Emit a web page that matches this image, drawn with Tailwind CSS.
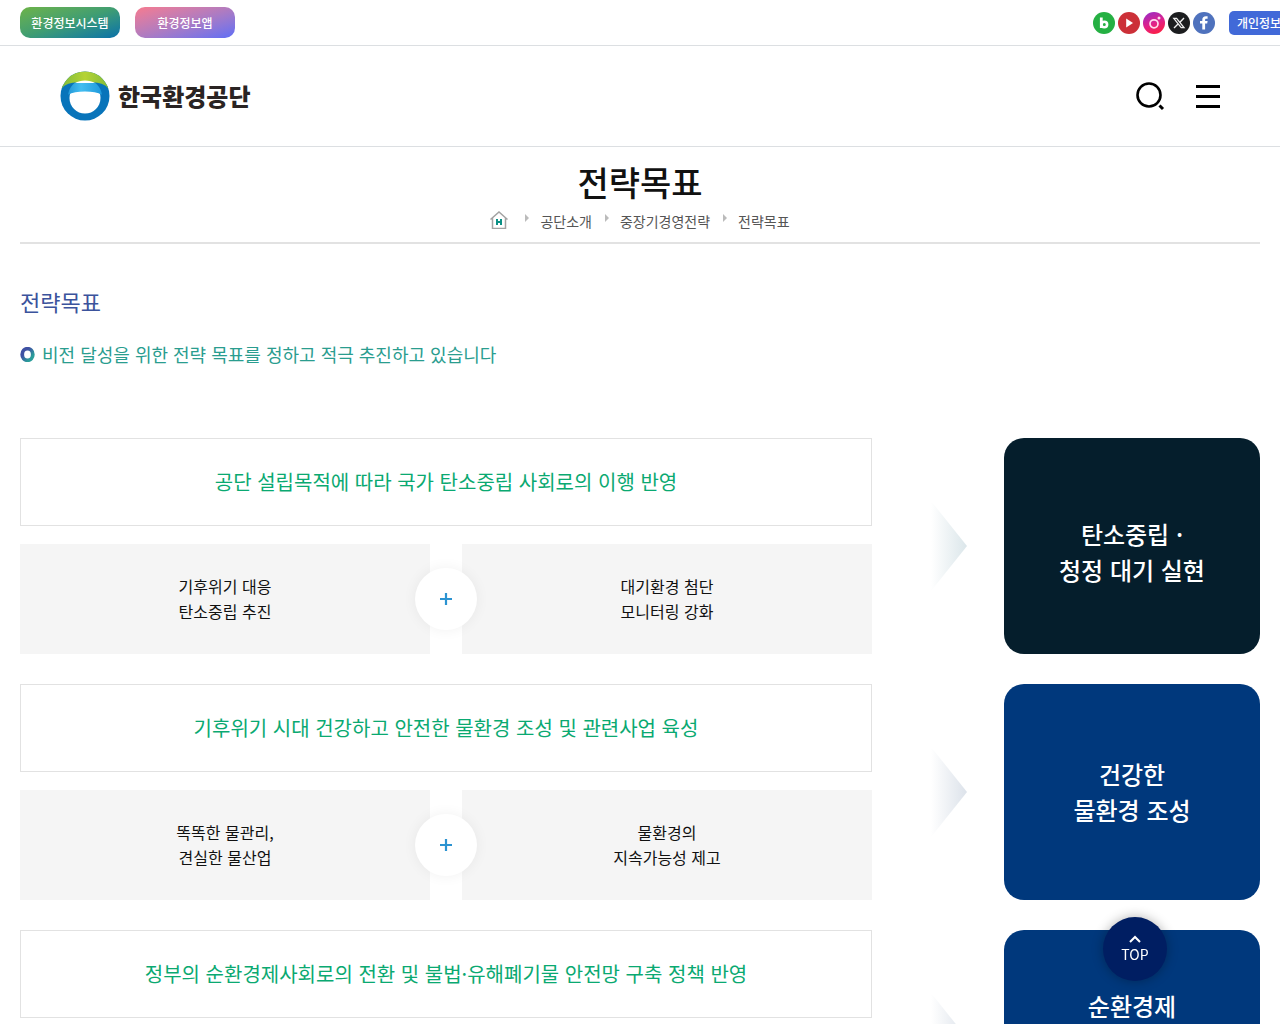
<!DOCTYPE html>
<html lang="ko">
<head>
<meta charset="utf-8">
<meta name="viewport" content="width=device-width, initial-scale=1">
<title>전략목표 | 한국환경공단</title>
<script src="https://cdn.jsdelivr.net/npm/@tailwindcss/browser@4"></script>
</head>
<body class="overflow-x-hidden bg-white font-['Noto_Sans_CJK_KR',sans-serif] text-[#111]">

<!-- Utility bar -->
<div class="flex h-[46px] items-center border-b border-[#dcdfe2] pl-5">
  <a href="#" class="flex h-[31px] w-[100px] items-center justify-center rounded-[10px] bg-linear-to-br from-[#6db345] via-[#3f9d72] to-[#0a70a8] text-[12px] font-medium text-white">환경정보시스템</a>
  <a href="#" class="ml-[15px] flex h-[31px] w-[100px] items-center justify-center rounded-[10px] bg-linear-to-br from-[#f77a8e] via-[#b07bc0] to-[#5f6cf5] text-[12px] font-medium text-white">환경정보앱</a>
  <ul class="ml-auto flex gap-[3px]">
    <li><a href="#" aria-label="블로그" class="block"><svg class="size-[22px]" viewBox="0 0 22 22"><circle cx="11" cy="11" r="11" fill="#25b043"/><path d="M8.300 5.500v10.500" stroke="#fff" stroke-width="2.800" fill="none"/><circle cx="11.300" cy="12.500" r="2.800" stroke="#fff" stroke-width="2.600" fill="none"/></svg></a></li>
    <li><a href="#" aria-label="유튜브" class="block"><svg class="size-[22px]" viewBox="0 0 22 22"><circle cx="11" cy="11" r="11" fill="#cc3038"/><path d="M8.200 6.500v9l6.800-4.500z" fill="#fff"/></svg></a></li>
    <li><a href="#" aria-label="인스타그램" class="block"><svg class="size-[22px]" viewBox="0 0 22 22"><defs><linearGradient id="insta" x1="0.2" y1="0" x2="0.6" y2="1"><stop offset="0" stop-color="#9a2bc4"/><stop offset=".55" stop-color="#e0218a"/><stop offset="1" stop-color="#fb1f45"/></linearGradient></defs><circle cx="11" cy="11" r="11" fill="url(#insta)"/><circle cx="11" cy="11.800" r="4" stroke="#ffd9ec" stroke-width="1.700" fill="none"/><circle cx="16" cy="6" r="1.500" fill="#ffd9ec"/></svg></a></li>
    <li><a href="#" aria-label="엑스" class="block"><svg class="size-[22px]" viewBox="0 0 22 22"><circle cx="11" cy="11" r="11" fill="#1c1d1f"/><path d="M5.800 6.300h2.800l7.400 9.400h-2.800z" fill="none" stroke="#eee" stroke-width="1.300"/><path d="M16 6l-4.300 4.400M10 12l-4 4" stroke="#eee" stroke-width="1.400"/></svg></a></li>
    <li><a href="#" aria-label="페이스북" class="block"><svg class="size-[22px]" viewBox="0 0 22 22"><circle cx="11" cy="11" r="11" fill="#4f72bd"/><path d="M9.300 17.500v-6h-2.300v-2.500h2.300V8c0-2.600 1.300-3.700 3.600-3.700h1.700v2.500h-1.200c-1 0-1.300.5-1.300 1.300v.9h2.500l-.4 2.500h-2.100v6z" fill="#fff"/></svg></a></li>
  </ul>
  <a href="#" class="ml-[14px] flex h-6 w-[51px] items-center overflow-hidden rounded-l-[5px] bg-[#4169d8] pl-2 text-[12px] font-medium whitespace-nowrap text-white">개인정보</a>
</div>

<!-- Header -->
<header class="flex h-[101px] items-center justify-between border-b border-[#dcdfe2] px-[60px]">
  <a href="#" class="flex items-center gap-2">
    <svg class="size-[50px]" viewBox="0 0 50 50" aria-hidden="true">
      <defs>
        <clipPath id="ring"><circle cx="25" cy="25" r="24.500"/></clipPath>
        <clipPath id="hole"><circle cx="25" cy="25.500" r="17"/></clipPath>
        <linearGradient id="leaf" x1="0" x2="1"><stop offset="0" stop-color="#7cbb3c"/><stop offset=".5" stop-color="#b5d334"/><stop offset="1" stop-color="#7fba3a"/></linearGradient>
        <linearGradient id="sea" x1="0" x2="1"><stop offset="0" stop-color="#1c8fd2"/><stop offset=".4" stop-color="#42bdf0"/><stop offset="1" stop-color="#1a94d8"/></linearGradient>
      </defs>
      <g clip-path="url(#ring)">
        <rect width="50" height="50" fill="#0874ba"/>
        <path d="M0 0h50v20c-3-6-9-8-15-8.500H15C9 12 3 14 0 20z" fill="url(#leaf)"/>
        <circle cx="25" cy="27" r="15.500" fill="#fff"/>
        <path d="M15 12c5-3.500 15-3.500 20 0z" fill="#fff"/>
        <g clip-path="url(#hole)"><path d="M5 12h40v14c-4-4-11-5.500-20-5.500S9 22 5 26z" fill="url(#sea)"/></g>
      </g>
    </svg>
    <span class="text-[24px] leading-[30px] font-black text-[#2a2423]">한국환경공단</span>
  </a>
  <div class="flex items-center gap-[31px]">
    <button type="button" aria-label="검색"><svg class="size-[30px]" viewBox="0 0 30 30" fill="none" stroke="#000"><circle cx="14" cy="14" r="11.500" stroke-width="2.600"/><path d="M24.500 24.500l3.500 3.500" stroke-width="3"/></svg></button>
    <button type="button" aria-label="전체메뉴" class="flex flex-col gap-[7px]"><span class="h-[3px] w-6 bg-black"></span><span class="h-[3px] w-6 bg-black"></span><span class="h-[3px] w-6 bg-black"></span></button>
  </div>
</header>

<main class="px-5">
  <!-- Page title -->
  <div class="flex flex-col items-center border-b-2 border-[#e2e2e2] pt-[10px] pb-[10px]">
    <h1 class="text-[34px] leading-[50px] font-medium">전략목표</h1>
    <nav aria-label="현재 위치" class="mt-[3px]">
      <ol class="flex items-center text-[14px] leading-[22px] text-[#555]">
        <li class="mr-1"><a href="#" aria-label="홈" class="block"><svg class="mb-[2px] size-[18px]" viewBox="0 0 18 18" fill="none"><path d="M.5 8.500L9 1l8.500 7.500M2.500 7v10.500h13V7" stroke="#a3a3a3" stroke-width="1.500"/><path d="M7 8v6M11 8v6M7 11h4" stroke="#0c9186" stroke-width="2"/></svg></a></li>
        <li class="flex items-center"><svg class="mr-[10px] ml-3 mb-[6px] h-2 w-[6px]" viewBox="0 0 6 8"><path d="M1 0l4 4-4 4z" fill="#bbb"/></svg><a href="#">공단소개</a></li>
        <li class="flex items-center"><svg class="mr-[10px] ml-3 mb-[6px] h-2 w-[6px]" viewBox="0 0 6 8"><path d="M1 0l4 4-4 4z" fill="#bbb"/></svg><a href="#">중장기경영전략</a></li>
        <li class="flex items-center"><svg class="mr-[10px] ml-3 mb-[6px] h-2 w-[6px]" viewBox="0 0 6 8"><path d="M1 0l4 4-4 4z" fill="#bbb"/></svg><a href="#" aria-current="page">전략목표</a></li>
      </ol>
    </nav>
  </div>

  <h2 class="mt-10 text-[22px] leading-[34px] text-[#3b539c]">전략목표</h2>
  <p class="mt-[21px] flex items-center gap-[7px] text-[18px] leading-[30px] text-[#2a9d8f]">
    <svg class="size-[15px] shrink-0" viewBox="0 0 15 15"><defs><linearGradient id="dot" x1="0" y1="0" x2="1" y2="1"><stop offset=".3" stop-color="#3f51a3"/><stop offset=".8" stop-color="#2a9d9a"/></linearGradient></defs><ellipse cx="7.500" cy="7.500" rx="5.300" ry="5.800" fill="none" stroke="url(#dot)" stroke-width="3.800"/></svg>
    비전 달성을 위한 전략 목표를 정하고 적극 추진하고 있습니다
  </p>

  <div class="mt-[69px] flex flex-col gap-[30px]">
    <section class="flex">
      <div class="flex flex-1 flex-col gap-[18px]">
        <h3 class="flex h-[88px] items-center justify-center border border-[#e2e2e2] text-[20px] text-[#0aa971]">공단 설립목적에 따라 국가 탄소중립 사회로의 이행 반영</h3>
        <div class="relative grid grid-cols-2 gap-8 text-center text-[16px] leading-[25px]">
          <p class="bg-[#f5f5f5] py-[30px]">기후위기 대응<br>탄소중립 추진</p>
          <p class="bg-[#f5f5f5] py-[30px]">대기환경 첨단<br>모니터링 강화</p>
          <span class="absolute inset-0 m-auto flex size-[62px] items-center justify-center rounded-full bg-white shadow-[0_0_14px_rgba(0,0,0,0.06)]"><svg class="size-[14px]" viewBox="0 0 14 14"><path d="M7 1v12M1 7h12" stroke="#2b93d1" stroke-width="2.200"/></svg></span>
        </div>
      </div>
      <div class="flex w-[132px] items-center justify-end pr-[37px]"><svg class="h-[100px] w-10" viewBox="0 0 40 100"><defs><linearGradient id="fade1" x1="0" x2="1"><stop offset="0.100" stop-color="#fff"/><stop offset="1" stop-color="#dbe6ea"/></linearGradient></defs><path d="M0 0l40 50L0 100z" fill="url(#fade1)"/></svg></div>
      <div class="flex h-[216px] w-64 items-center justify-center rounded-[20px] bg-[#051e2c] pt-3 text-center text-[24px] leading-9 font-medium text-white">탄소중립 ·<br>청정 대기 실현</div>
    </section>

    <section class="flex">
      <div class="flex flex-1 flex-col gap-[18px]">
        <h3 class="flex h-[88px] items-center justify-center border border-[#e2e2e2] text-[20px] text-[#0aa971]">기후위기 시대 건강하고 안전한 물환경 조성 및 관련사업 육성</h3>
        <div class="relative grid grid-cols-2 gap-8 text-center text-[16px] leading-[25px]">
          <p class="bg-[#f5f5f5] py-[30px]">똑똑한 물관리,<br>견실한 물산업</p>
          <p class="bg-[#f5f5f5] py-[30px]">물환경의<br>지속가능성 제고</p>
          <span class="absolute inset-0 m-auto flex size-[62px] items-center justify-center rounded-full bg-white shadow-[0_0_14px_rgba(0,0,0,0.06)]"><svg class="size-[14px]" viewBox="0 0 14 14"><path d="M7 1v12M1 7h12" stroke="#2b93d1" stroke-width="2.200"/></svg></span>
        </div>
      </div>
      <div class="flex w-[132px] items-center justify-end pr-[37px]"><svg class="h-[100px] w-10" viewBox="0 0 40 100"><defs><linearGradient id="fade2" x1="0" x2="1"><stop offset="0.100" stop-color="#fff"/><stop offset="1" stop-color="#dce2ea"/></linearGradient></defs><path d="M0 0l40 50L0 100z" fill="url(#fade2)"/></svg></div>
      <div class="flex h-[216px] w-64 items-center justify-center rounded-[20px] bg-[#00387c] text-center text-[24px] leading-9 font-medium text-white">건강한<br>물환경 조성</div>
    </section>

    <section class="flex">
      <div class="flex flex-1 flex-col gap-[18px]">
        <h3 class="flex h-[88px] items-center justify-center border border-[#e2e2e2] text-[20px] text-[#0aa971]">정부의 순환경제사회로의 전환 및 불법·유해폐기물 안전망 구축 정책 반영</h3>
      </div>
      <div class="flex w-[132px] items-center justify-end pr-[37px]"><svg class="h-[100px] w-10" viewBox="0 0 40 100"><defs><linearGradient id="fade3" x1="0" x2="1"><stop offset="0.100" stop-color="#fff"/><stop offset="1" stop-color="#dce2ea"/></linearGradient></defs><path d="M0 0l40 50L0 100z" fill="url(#fade3)"/></svg></div>
      <div class="flex h-[216px] w-64 justify-center rounded-[20px] bg-[#00387c] pt-[58px] text-center text-[24px] leading-9 font-medium text-white">순환경제</div>
    </section>
  </div>
</main>

<a href="#" class="fixed right-[113px] bottom-[43px] flex size-16 flex-col items-center justify-center rounded-full bg-[#001e62] text-[14px] leading-[18px] text-white shadow-[0_0_12px_rgba(0,0,0,0.3)]">
  <svg class="mb-[2px] h-[8px] w-3" viewBox="0 0 12 8"><path d="M1 7l5-5 5 5" fill="none" stroke="#fff" stroke-width="2"/></svg>
  TOP
</a>
</body>
</html>
